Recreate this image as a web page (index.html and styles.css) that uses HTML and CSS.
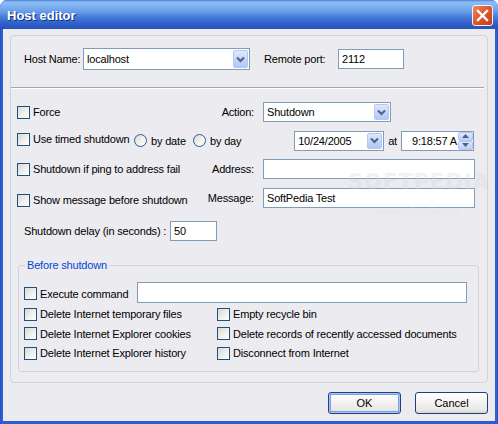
FILE: index.html
```html
<!DOCTYPE html>
<html>
<head>
<meta charset="utf-8">
<link rel="stylesheet" href="styles.css">
</head>
<body>
<div class="window">
  <div class="titlebar">
    <span class="title">Host editor</span>
    <span class="close"><svg width="13" height="13" viewBox="0 0 13 13"><path d="M2 2 L11 11 M11 2 L2 11" stroke="#fff" stroke-width="2.4" stroke-linecap="square" fill="none"/></svg></span>
  </div>
  <div class="client">
    <div class="outer">
      <div class="host-row">
        <span class="host-lbl">Host Name:</span>
        <div class="combo host-combo"><span class="val">localhost</span><span class="drop"><svg width="9" height="7" viewBox="0 0 9 7"><path d="M1 1.5 L4.5 5 L8 1.5" stroke="#4D6185" stroke-width="2" fill="none"/></svg></span></div>
        <span class="port-lbl">Remote port:</span>
        <div class="tb port-tb">2112</div>
      </div>
      <div class="sep"></div>
      <div class="opts">
        <div class="cell"><span class="chk"><span class="cb"></span>Force</span></div>
        <div class="cell rlbl">Action:</div>
        <div class="cell"><div class="combo action-combo"><span class="val">Shutdown</span><span class="drop"><svg width="9" height="7" viewBox="0 0 9 7"><path d="M1 1.5 L4.5 5 L8 1.5" stroke="#4D6185" stroke-width="2" fill="none"/></svg></span></div></div>

        <div class="timed-row">
          <span class="chk timed-chk"><span class="cb"></span>Use timed shutdown</span>
          <span class="radio date-radio"><span class="rb"></span>by date</span>
          <span class="radio"><span class="rb"></span>by day</span>
          <div class="combo date-combo"><span class="val">10/24/2005</span><span class="drop"><svg width="9" height="7" viewBox="0 0 9 7"><path d="M1 1.5 L4.5 5 L8 1.5" stroke="#4D6185" stroke-width="2" fill="none"/></svg></span></div>
          <span class="at">at</span>
          <div class="tb time-tb"><span class="time-val">9:18:57 A</span><span class="spin"><span class="sp"><svg width="7" height="4" viewBox="0 0 7 4"><path d="M0 4 L3.5 0 L7 4 Z" fill="#4D6185"/></svg></span><span class="sp"><svg width="7" height="4" viewBox="0 0 7 4"><path d="M0 0 L3.5 4 L7 0 Z" fill="#4D6185"/></svg></span></span></div>
        </div>

        <div class="cell"><span class="chk"><span class="cb"></span>Shutdown if ping to address fail</span></div>
        <div class="cell rlbl">Address:</div>
        <div class="cell"><div class="tb wide-tb"></div></div>

        <div class="cell msg-cell"><span class="chk"><span class="cb"></span>Show message before shutdown</span></div>
        <div class="cell rlbl">Message:</div>
        <div class="cell"><div class="tb wide-tb">SoftPedia Test</div></div>
      </div>
      <div class="delay-row">
        <span class="delay-lbl">Shutdown delay (in seconds) :</span>
        <div class="tb delay-tb">50</div>
      </div>
      <fieldset class="before">
        <legend>Before shutdown</legend>
        <div class="exec-row">
          <span class="chk exec-chk"><span class="cb"></span>Execute command</span>
          <div class="tb exec-tb"></div>
        </div>
        <div class="pre-grid">
          <span class="chk"><span class="cb"></span>Delete Internet temporary files</span>
          <span class="chk"><span class="cb"></span>Empty recycle bin</span>
          <span class="chk"><span class="cb"></span>Delete Internet Explorer cookies</span>
          <span class="chk"><span class="cb"></span>Delete records of recently accessed documents</span>
          <span class="chk"><span class="cb"></span>Delete Internet Explorer history</span>
          <span class="chk"><span class="cb"></span>Disconnect from Internet</span>
        </div>
      </fieldset>
    </div>
    <div class="buttons">
      <button class="btn default">OK</button>
      <button class="btn">Cancel</button>
    </div>
  </div>
  <div class="watermark"><span class="wm-big">SOFTPEDIA</span><span class="wm-small">www.softpedia.com</span></div>
</div>
</body>
</html>
```

FILE: styles.css
```css
html, body {
  margin: 0;
  padding: 0;
  background: #ffffff;
}
body {
  font-family: "Liberation Sans", Arial, sans-serif;
  font-size: 11px;
  letter-spacing: -0.18px;
  color: #000;
}
.window {
  position: relative;
  width: 498px;
  height: 424px;
  display: flex;
  flex-direction: column;
  background: linear-gradient(90deg, #1846b8 0, #2f62d4 1px, #2c5dcf 3px, #2c5dcf 495px, #2f62d4 497px, #1846b8 498px);
  border-radius: 7px 7px 0 0;
  overflow: hidden;
}
.titlebar {
  height: 29px;
  flex: none;
  display: flex;
  align-items: center;
  justify-content: space-between;
  padding: 0 5px 0 7px;
  background: linear-gradient(#4a80dc 0, #8cbcf4 2px, #80b3f1 6px, #6a9fea 11px, #4c82dd 16px, #3769cf 21px, #2c5bc4 25px, #2852ba 29px);
}
.title {
  color: #fff;
  font-weight: bold;
  font-size: 13px;
  letter-spacing: 0;
  text-shadow: 1px 1px 0 #12307a;
  margin-top: 1px;
}
.close {
  width: 21px;
  height: 21px;
  box-sizing: border-box;
  border: 1px solid #f4f4f4;
  border-radius: 3px;
  background: linear-gradient(135deg, #f08a62 0, #e0582e 45%, #c73e16 100%);
  display: flex;
  align-items: center;
  justify-content: center;
  margin-top: 2px;
}
.client {
  flex: 1;
  margin: 0 3px 3px;
  background: #ecebef;
  display: flex;
  flex-direction: column;
}
.outer {
  margin: 6px 7px 0;
  height: 348px;
  box-sizing: border-box;
  border: 1px solid #d3d2d6;
  border-radius: 4px;
  padding-top: 12px;
}
.host-row {
  display: flex;
  align-items: center;
  padding-left: 13px;
  height: 22px;
}
.host-lbl { width: 59px; }
.port-lbl { width: 74px; margin-left: 14px; }

.tb {
  box-sizing: border-box;
  height: 20px;
  border: 1px solid #7f9db9;
  background: #fff;
  padding-left: 3px;
  line-height: 18px;
  white-space: nowrap;
}
.port-tb { width: 66px; }
.combo {
  box-sizing: border-box;
  display: flex;
  height: 20px;
  border: 1px solid #7f9db9;
  background: #fff;
}
.combo .val {
  flex: 1;
  padding-left: 3px;
  line-height: 18px;
  white-space: nowrap;
  overflow: hidden;
}
.combo .drop {
  width: 15px;
  margin: 1px;
  box-sizing: border-box;
  border: 1px solid #b3c7f3;
  border-radius: 2px;
  background: linear-gradient(#dfe8fd, #c1d2fa 60%, #b4c8f6);
  display: flex;
  align-items: center;
  justify-content: center;
}
.host-combo { width: 167px; height: 22px; }
.host-combo .val { line-height: 20px; }
.action-combo { width: 128px; }
.date-combo { width: 90px; margin-left: auto; }

.sep {
  margin: 17px 3px 0 0;
  border-top: 1px solid #a7a6ab;
  border-bottom: 1px solid #ffffff;
}
.opts {
  margin-top: 13px;
  padding-left: 6px;
  display: grid;
  grid-template-columns: 184px 62px 212px;
  grid-auto-rows: 20px;
  row-gap: 8.5px;
}
.cell {
  display: flex;
  align-items: center;
}
.rlbl {
  justify-content: flex-end;
  padding-right: 9px;
}
.msg-cell { padding-top: 5px; }
.chk, .radio {
  display: inline-flex;
  align-items: center;
  white-space: nowrap;
}
.cb {
  width: 13px;
  height: 13px;
  box-sizing: border-box;
  border: 1px solid #1c5180;
  background: linear-gradient(135deg, #d8d8d2 0, #f2f2ee 60%, #ffffff 100%);
  margin-right: 3px;
  flex: none;
}
.rb {
  width: 13px;
  height: 13px;
  box-sizing: border-box;
  border-radius: 50%;
  border: 1px solid #2a5a9c;
  background: linear-gradient(135deg, #d8d8d2 0, #f4f4f0 60%, #ffffff 100%);
  margin-right: 4px;
  flex: none;
}
.timed-row {
  grid-column: 1 / -1;
  display: flex;
  align-items: center;
}
.timed-chk { width: 117px; margin-top: -3px; }
.date-radio { width: 59px; }
.at { margin: 0 4px; }
.time-tb {
  width: 73px;
  display: flex;
  padding-left: 0;
  margin-right: 1px;
}
.time-val {
  flex: 1;
  padding-left: 10px;
  overflow: hidden;
}
.spin {
  width: 15px;
  display: flex;
  flex-direction: column;
}
.sp {
  flex: 1;
  box-sizing: border-box;
  border: 1px solid #b3c7f3;
  border-radius: 2px;
  background: linear-gradient(#dfe8fd, #bccff8);
  display: flex;
  align-items: center;
  justify-content: center;
}
.wide-tb { width: 212px; }

.delay-row {
  display: flex;
  align-items: center;
  margin-top: 13px;
  padding-left: 13px;
}
.delay-lbl { width: 146px; white-space: nowrap; }
.delay-tb { width: 47px; }

.before {
  margin: 18px 8px 0 7px;
  padding: 10px 0 8px 5px;
  border: 1px solid #d3d2d6;
  border-radius: 3px;
  min-width: 0;
}
.before legend {
  padding: 0 2px;
  margin-left: 1px;
  line-height: 13px;
  color: #0046d5;
}
.exec-row {
  display: flex;
  align-items: center;
  height: 21px;
}
.exec-chk { width: 113px; margin-top: 3px; }
.exec-tb { width: 330px; height: 21px; }
.pre-grid {
  margin-top: 2px;
  display: grid;
  grid-template-columns: 193px auto;
  grid-auto-rows: 19.5px;
  align-items: center;
}

.buttons {
  display: flex;
  justify-content: flex-end;
  gap: 14px;
  padding-right: 7px;
  margin-top: 9px;
}
.btn {
  width: 73px;
  height: 22px;
  box-sizing: border-box;
  border: 1px solid #1c3f86;
  border-radius: 3px;
  background: linear-gradient(#ffffff 0, #f5f5f3 40%, #e9e8e4 85%, #d6d3cc 100%);
  font-family: "Liberation Sans", Arial, sans-serif;
  font-size: 11px;
  color: #000;
  padding: 0;
}
.btn.default {
  box-shadow: inset 0 0 0 1px #a9c4f0, inset 0 0 0 2px #7ca0e0;
}
.watermark {
  position: absolute;
  left: 348px;
  top: 170px;
  display: flex;
  flex-direction: column;
  align-items: center;
  pointer-events: none;
}
.wm-big {
  font-family: "DejaVu Sans", sans-serif;
  font-weight: bold;
  font-size: 21px;
  letter-spacing: 1px;
  color: rgba(255, 255, 255, 0.2);
  text-shadow: 0 0 1px rgba(150, 150, 160, 0.15);
}
.wm-small {
  margin-top: 12px;
  font-size: 10px;
  color: rgba(255, 255, 255, 0.3);
  text-shadow: 0 0 1px rgba(150, 150, 160, 0.15);
}
```
